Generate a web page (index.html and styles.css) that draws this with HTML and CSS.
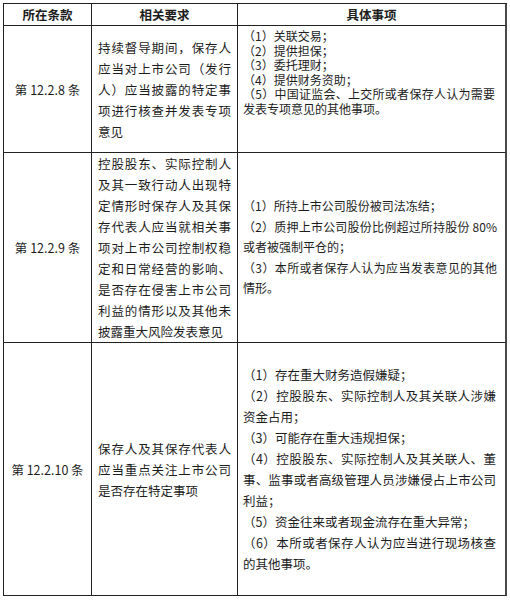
FILE: index.html
```html
<!DOCTYPE html>
<html lang="zh-CN">
<head>
<meta charset="utf-8">
<title>保存人持续督导特定事项</title>
<link rel="stylesheet" href="styles.css">
</head>
<body>
<div class="rules" role="table">
  <div class="cell head" role="columnheader">所在条款</div>
  <div class="cell head" role="columnheader">相关要求</div>
  <div class="cell head last" role="columnheader">具体事项</div>

  <div class="cell clause" role="cell">第 12.2.8 条</div>
  <div class="cell req" role="cell">持续督导期间，保存人应当对上市公司（发行人）应当披露的特定事项进行核查并发表专项意见</div>
  <div class="cell items items-tight last" role="cell">
    <p>（1）关联交易；</p>
    <p>（2）提供担保；</p>
    <p>（3）委托理财；</p>
    <p>（4）提供财务资助；</p>
    <p>（5）中国证监会、上交所或者保存人认为需要发表专项意见的其他事项。</p>
  </div>

  <div class="cell clause" role="cell">第 12.2.9 条</div>
  <div class="cell req" role="cell">控股股东、实际控制人及其一致行动人出现特定情形时保存人及其保存代表人应当就相关事项对上市公司控制权稳定和日常经营的影响、是否存在侵害上市公司利益的情形以及其他未披露重大风险发表意见</div>
  <div class="cell items items-mid last" role="cell">
    <p>（1）所持上市公司股份被司法冻结；</p>
    <p>（2）质押上市公司股份比例超过所持股份 80%或者被强制平仓的；</p>
    <p>（3）本所或者保存人认为应当发表意见的其他情形。</p>
  </div>

  <div class="cell clause" role="cell">第 12.2.10 条</div>
  <div class="cell req" role="cell">保存人及其保存代表人应当重点关注上市公司是否存在特定事项</div>
  <div class="cell items items-wide last" role="cell">
    <p>（1）存在重大财务造假嫌疑；</p>
    <p>（2）控股股东、实际控制人及其关联人涉嫌资金占用；</p>
    <p>（3）可能存在重大违规担保；</p>
    <p>（4）控股股东、实际控制人及其关联人、董事、监事或者高级管理人员涉嫌侵占上市公司利益；</p>
    <p>（5）资金往来或者现金流存在重大异常；</p>
    <p>（6）本所或者保存人认为应当进行现场核查的其他事项。</p>
  </div>
</div>
</body>
</html>
```

FILE: styles.css
```css
html, body {
  background: #ffffff;
}

body {
  margin: 3px 0 0 3px;
  font-family: "Noto Sans CJK SC", "Noto Sans", sans-serif;
  color: #1d1d1d;
  text-spacing-trim: space-all;
  font-size: 12.5px;
}

.rules {
  display: grid;
  grid-template-columns: 88px 146px 269px;
  grid-template-rows: 22px 127px 190px 253px;
  width: 504px;
  box-sizing: border-box;
  border-top: 1px solid #222222;
  border-left: 1px solid #222222;
}

.cell {
  box-sizing: border-box;
  border-right: 1px solid #222222;
  border-bottom: 1px solid #222222;
  display: flex;
  flex-direction: column;
  justify-content: center;
  min-width: 0;
}

.cell.last {
  border-right: 2px solid #4a4a4a;
}

.head {
  font-weight: 700;
  align-items: center;
  line-height: 21px;
}

.clause {
  align-items: center;
  line-height: 21px;
}

.req {
  padding: 0 6px;
  line-height: 21px;
  text-align: justify;
}

.items p {
  margin: 0;
  text-align: justify;
}

.items-tight {
  justify-content: flex-start;
  padding: 3px 10px 0 5px;
  font-size: 12px;
  line-height: 14.5px;
}

.items-mid {
  padding: 0 8px 0 5px;
  font-size: 12px;
  line-height: 20.5px;
}

.items-wide {
  padding: 0 9px 0 5px;
  line-height: 21px;
}
```
